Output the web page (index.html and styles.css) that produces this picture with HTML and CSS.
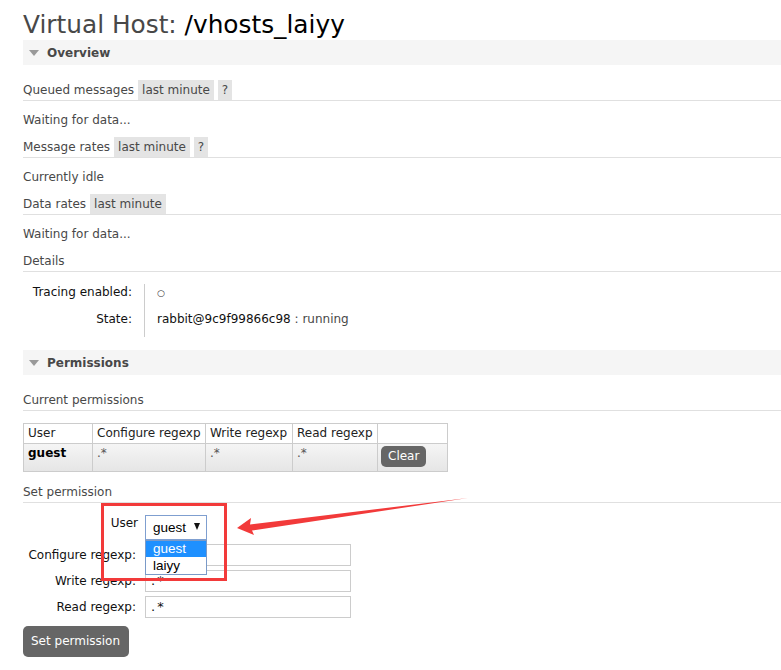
FILE: index.html
```html
<!DOCTYPE html>
<html>
<head>
<meta charset="utf-8">
<title>Virtual Host</title>
<link rel="stylesheet" href="styles.css">
</head>
<body>
<div class="page">
  <h1>Virtual Host: <b>/vhosts_laiyy</b></h1>

  <h2 class="bar"><span class="tri"></span>Overview</h2>
  <div class="hd"><span>Queued messages</span><span class="chip">last minute</span><span class="chip">?</span></div>
  <p>Waiting for data...</p>
  <div class="hd"><span>Message rates</span><span class="chip">last minute</span><span class="chip">?</span></div>
  <p>Currently idle</p>
  <div class="hd"><span>Data rates</span><span class="chip">last minute</span></div>
  <p>Waiting for data...</p>
  <div class="hd"><span>Details</span></div>
  <div class="facts">
    <div class="fl">Tracing enabled:</div><div class="fv"><span class="circ">○</span></div>
    <div class="fl">State:</div><div class="fv"><span class="node">rabbit@9c9f99866c98</span> : running</div>
  </div>

  <h2 class="bar bar2"><span class="tri"></span>Permissions</h2>
  <div class="hd"><span>Current permissions</span></div>
  <table class="perms">
    <colgroup><col class="c1"><col class="c2"><col class="c3"><col class="c4"><col class="c5"></colgroup>
    <thead>
      <tr><th>User</th><th>Configure regexp</th><th>Write regexp</th><th>Read regexp</th><th></th></tr>
    </thead>
    <tbody>
      <tr><td class="user">guest</td><td>.*</td><td>.*</td><td>.*</td><td class="btncell"><span class="btn small">Clear</span></td></tr>
    </tbody>
  </table>
  <div class="hd hd-set"><span>Set permission</span></div>
  <div class="form">
    <div class="lab lab-top">User</div>
    <div class="field">
      <div class="select"><span>guest</span><span class="arr"></span></div>
      <div class="dropdown">
        <div class="opt sel">guest</div>
        <div class="opt">laiyy</div>
      </div>
    </div>
    <div class="lab">Configure regexp:</div>
    <div class="field"><div class="input"></div></div>
    <div class="lab">Write regexp:</div>
    <div class="field"><div class="input">.*</div></div>
    <div class="lab">Read regexp:</div>
    <div class="field"><div class="input">.*</div></div>
  </div>
  <div class="btn big">Set permission</div>
</div>
<svg class="annot" width="781" height="670" viewBox="0 0 781 670">
  <rect x="102.5" y="504.5" width="123" height="75" fill="none" stroke="#f23a3a" stroke-width="3"/>
  <polygon points="237,528 251,518 250,524.5 468,498 252,530.5 254,535" fill="#f23a3a"/>
</svg>
</body>
</html>
```
FILE: styles.css
```css
html, body {
  margin: 0;
  background: #fff;
}
body {
  font-family: "DejaVu Sans", Verdana, sans-serif;
  font-size: 12px;
  color: #484848;
  position: relative;
  overflow: hidden;
}
.page {
  padding-left: 23px;
  padding-bottom: 20px;
}
h1 {
  margin: 10px 0 0;
  font-size: 24.8px;
  line-height: 30px;
  font-weight: normal;
  color: #484848;
}
h1 b {
  font-weight: normal;
  color: #000;
}
.bar {
  margin: 0 0 15px;
  height: 25px;
  background: #f5f5f5;
  display: flex;
  align-items: center;
  padding-left: 6px;
  font-size: 12px;
  font-weight: bold;
  color: #484848;
}
.bar2 {
  margin-top: 13px;
}
.tri {
  width: 0;
  height: 0;
  border-left: 5.5px solid transparent;
  border-right: 5.5px solid transparent;
  border-top: 6px solid #999;
  margin-right: 8px;
}
.hd {
  display: flex;
  gap: 4px;
  line-height: 20px;
  border-bottom: 1px solid #e0e0e0;
}
.chip {
  background: #e4e4e4;
  padding: 0 4px;
}
p {
  margin: 9px 0 7px;
  line-height: 20px;
}
.facts {
  margin-top: 12px;
  display: grid;
  grid-template-columns: 121px max-content;
  line-height: 16px;
}
.fl {
  text-align: right;
  padding: 0 12px 10px 0;
  color: #111;
}
.fv {
  border-left: 1px solid #ccc;
  padding: 0 0 10px 10px;
  color: #484848;
}
.circ {
  font-size: 9px;
  padding-left: 2px;
  color: #333;
}
.node {
  color: #111;
  padding-left: 2px;
}
.perms {
  margin-top: 12px;
  border-collapse: collapse;
  table-layout: fixed;
  width: 424px;
}
.c1 { width: 69px; }
.c2 { width: 113px; }
.c3 { width: 87px; }
.c4 { width: 85px; }
.c5 { width: 70px; }
.perms th, .perms td {
  border: 1px solid #ccc;
  text-align: left;
  font-weight: normal;
  padding: 0 4px;
  line-height: 19px;
  vertical-align: top;
  white-space: nowrap;
  color: #222;
}
.perms tbody tr {
  background: linear-gradient(#f5f5f5, #e5e5e5);
}
.perms td {
  height: 25px;
  padding-bottom: 0;
  color: #555;
}
.perms td.user {
  font-weight: bold;
  color: #000;
}
.btncell {
  padding-top: 2px !important;
  padding-left: 3px !important;
}
.btn {
  display: inline-block;
  background: #666;
  color: #fff;
  border-radius: 5px;
}
.btn.small {
  height: 21px;
  line-height: 21px;
  padding: 0 7px;
  font-size: 12px;
}
.hd-set {
  margin-top: 10px;
}
.form {
  margin-top: 12px;
  display: grid;
  grid-template-columns: 122px 206px;
  row-gap: 4px;
}
.lab {
  text-align: right;
  padding-right: 9px;
  color: #111;
  line-height: 16px;
  align-self: center;
}
.lab-top {
  align-self: start;
  padding-top: 0;
  padding-right: 7px;
  line-height: 16px;
}
.field {
  position: relative;
}
.select {
  box-sizing: border-box;
  width: 62px;
  height: 25px;
  border: 1px solid #7f9fd0;
  display: flex;
  align-items: center;
  padding-left: 7px;
  font-family: "Liberation Sans", Arial, sans-serif;
  font-size: 13.5px;
  color: #000;
}
.arr {
  margin-left: 8px;
  width: 0;
  height: 0;
  border-left: 3.5px solid transparent;
  border-right: 3.5px solid transparent;
  border-top: 7px solid #111;
  margin-top: -2px;
}
.dropdown {
  position: absolute;
  left: 0;
  top: 25px;
  width: 62px;
  box-sizing: border-box;
  border: 1px solid #7a9ac8;
  background: #fff;
  font-family: "Liberation Sans", Arial, sans-serif;
  font-size: 13.5px;
  color: #000;
  z-index: 2;
}
.opt {
  height: 17px;
  line-height: 17px;
  padding-left: 7px;
}
.opt.sel {
  background: #1e90ff;
  color: #fff;
  height: 16px;
  line-height: 16px;
}
.input {
  box-sizing: border-box;
  width: 206px;
  height: 22px;
  border: 1px solid #ccc;
  line-height: 20px;
  padding-left: 5px;
  font-size: 13px;
  letter-spacing: 2px;
  color: #111;
}
.btn.big {
  margin-top: 8px;
  height: 31px;
  line-height: 31px;
  padding: 0 9px 0 8px;
  font-size: 12px;
}
.annot {
  position: absolute;
  left: 0;
  top: 0;
  pointer-events: none;
}
```
